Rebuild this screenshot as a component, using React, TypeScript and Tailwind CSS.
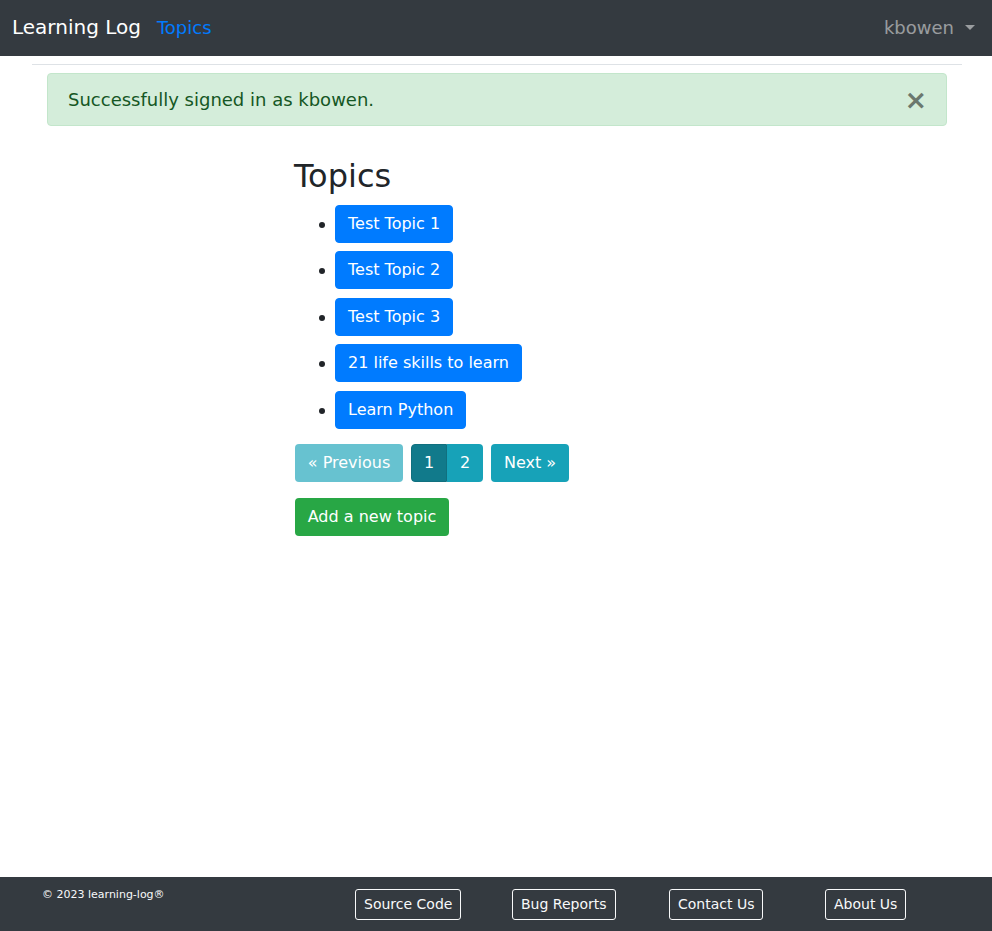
import React from "react";

const font = { fontFamily: '"DejaVu Sans", Verdana, sans-serif' };

function TopicButton({ label }: { label: string }) {
  return (
    <button className="h-[38px] rounded-[4px] bg-[#007bff] px-[12px] text-[16px] leading-[24px] text-white border border-[#007bff]">
      {label}
    </button>
  );
}

function FooterButton({ label }: { label: string }) {
  return (
    <button className="h-[31px] rounded-[3px] border border-[#f8f9fa] px-[8px] text-[14px] leading-[21px] text-[#f8f9fa]">
      {label}
    </button>
  );
}

export default function App() {
  const topics = ["Test Topic 1", "Test Topic 2", "Test Topic 3", "21 life skills to learn", "Learn Python"];
  return (
    <div className="flex h-screen flex-col bg-white text-[18px] text-[#212529]" style={font}>
      <nav className="flex h-[56px] shrink-0 items-center bg-[#343a40] pb-[2px] pl-[12px] pr-[17px]">
        <span className="text-[20px] leading-[30px] text-white">Learning Log</span>
        <span className="ml-[16px] text-[18px] text-[#007bff]">Topics</span>
        <div className="ml-auto flex items-center text-[18px] text-[rgba(255,255,255,0.5)]">
          <span>kbowen</span>
          <span className="ml-[11px] h-0 w-0 border-x-[5px] border-t-[5px] border-x-transparent border-t-[rgba(255,255,255,0.5)]"></span>
        </div>
      </nav>

      <div className="mx-[32px] mt-[8px] w-[930px] border-t border-[#dee2e6]"></div>

      <div className="mx-[47px] mt-[8px] flex h-[53px] w-[900px] items-center rounded-[4px] border border-[#c3e6cb] bg-[#d4edda] pl-[20px] pr-[19px] text-[#155724]">
        <span>Successfully signed in as kbowen.</span>
        <span className="ml-auto text-[27px] font-bold leading-none text-[#6b786e]">×</span>
      </div>

      <div className="ml-[294px] mt-[30px]">
        <h2 className="text-[32px] leading-[40px] text-[#212529]">Topics</h2>
        <ul className="mt-[9px] list-none">
          {topics.map((t) => (
            <li key={t} className="flex h-[46.4px] items-start">
              <span className="ml-[25px] mr-[10px] mt-[17px] h-[6px] w-[6px] rounded-full bg-[#212529]"></span>
              <TopicButton label={t} />
            </li>
          ))}
        </ul>
        <div className="ml-[1px] mt-[7px] flex items-center">
          <button className="h-[38px] w-[108px] rounded-[4px] bg-[#17a2b8] text-[16px] leading-[24px] text-white opacity-65">
            « Previous
          </button>
          <div className="ml-[8px] flex">
            <button className="h-[38px] w-[36px] rounded-l-[4px] border border-[#10707f] bg-[#117a8b] text-[16px] text-white">1</button>
            <button className="h-[38px] w-[36px] rounded-r-[4px] bg-[#17a2b8] text-[16px] text-white">2</button>
          </div>
          <button className="ml-[8px] h-[38px] w-[78px] rounded-[4px] bg-[#17a2b8] text-[16px] leading-[24px] text-white">
            Next »
          </button>
        </div>
        <button className="ml-[1px] mt-[16px] h-[38px] w-[154px] rounded-[4px] bg-[#28a745] text-[16px] leading-[24px] text-white">
          Add a new topic
        </button>
      </div>

      <footer className="mt-auto flex h-[54px] shrink-0 items-start bg-[#343a40]">
        <div className="w-[355px] pl-[42px] pt-[10px] text-[11px] leading-[16px] text-[#f8f9fa]">© 2023 learning-log®</div>
        <div className="w-[157px] pt-[12px]"><FooterButton label="Source Code" /></div>
        <div className="w-[157px] pt-[12px]"><FooterButton label="Bug Reports" /></div>
        <div className="w-[156px] pt-[12px]"><FooterButton label="Contact Us" /></div>
        <div className="w-[156px] pt-[12px]"><FooterButton label="About Us" /></div>
      </footer>
    </div>
  );
}
